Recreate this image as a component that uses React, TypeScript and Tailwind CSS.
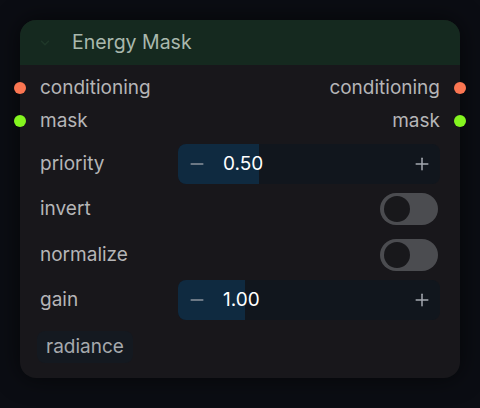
import { ChevronDown, Minus, Plus } from "lucide-react";

type PortProps = { label: string; color: string };

function PortRow({ label, color }: PortProps) {
  return (
    <div className="flex h-[32.5px] items-center justify-between">
      <div className="flex items-center">
        <span className={`-ml-[26px] h-3 w-3 rounded-full ${color}`} />
        <span className="ml-[14px]">{label}</span>
      </div>
      <div className="flex items-center">
        <span>{label}</span>
        <span className={`ml-[14px] -mr-[26px] h-3 w-3 rounded-full ${color}`} />
      </div>
    </div>
  );
}

function NumberRow({ label, value, fill }: { label: string; value: string; fill: number }) {
  return (
    <div className="flex h-[45.5px] items-center justify-between">
      <span>{label}</span>
      <div className="relative flex h-10 w-[262px] items-center overflow-hidden rounded-lg bg-[#11161d]">
        <div className="absolute inset-y-0 left-0 bg-[#0f2a40]" style={{ width: fill }} />
        <Minus className="relative ml-[9px] text-[#8a929c]" size={20} strokeWidth={1.8} />
        <span className="relative ml-[16px] text-white">{value}</span>
        <Plus className="relative ml-auto mr-[8px] text-[#a4a9b0]" size={20} strokeWidth={1.8} />
      </div>
    </div>
  );
}

function ToggleRow({ label }: { label: string }) {
  return (
    <div className="flex h-[45.5px] items-center justify-between">
      <span>{label}</span>
      <div className="mr-[2px] flex h-8 w-[58px] items-center rounded-full bg-[#4b4c50] px-1">
        <span className="h-[26px] w-[26px] rounded-full bg-[#18181b]" />
      </div>
    </div>
  );
}

export default function App() {
  return (
    <div
      className="h-[408px] w-[480px] bg-[#0b0d13] pl-5 pt-5"
      style={{ fontFamily: "Inter, 'Noto Sans', sans-serif" }}
    >
      <div className="w-[440px] rounded-2xl bg-[#18171b] shadow-[0_0_24px_rgba(0,0,0,0.6)]">
        <div className="flex h-[45px] items-center rounded-t-2xl bg-[#15291f]">
          <ChevronDown className="ml-[18px] text-[#1f3829]" size={14} strokeWidth={2.5} />
          <span className="ml-[20px] text-[19.5px] text-[#a9b8ad]">Energy Mask</span>
        </div>
        <div className="px-5 pb-[15px] pt-[7px] text-[19px] text-[#b5b5b7]">
          <PortRow label="conditioning" color="bg-[#fb7652]" />
          <PortRow label="mask" color="bg-[#84f51f]" />
          <div className="mt-[4px]">
            <NumberRow label="priority" value="0.50" fill={81} />
            <ToggleRow label="invert" />
            <ToggleRow label="normalize" />
            <NumberRow label="gain" value="1.00" fill={67} />
          </div>
          <div className="mt-[8px] flex">
            <span className="-ml-[3px] flex h-8 items-center rounded-lg bg-[#141920] px-[9px] text-[#a6a9ad]">
              radiance
            </span>
          </div>
        </div>
      </div>
    </div>
  );
}
